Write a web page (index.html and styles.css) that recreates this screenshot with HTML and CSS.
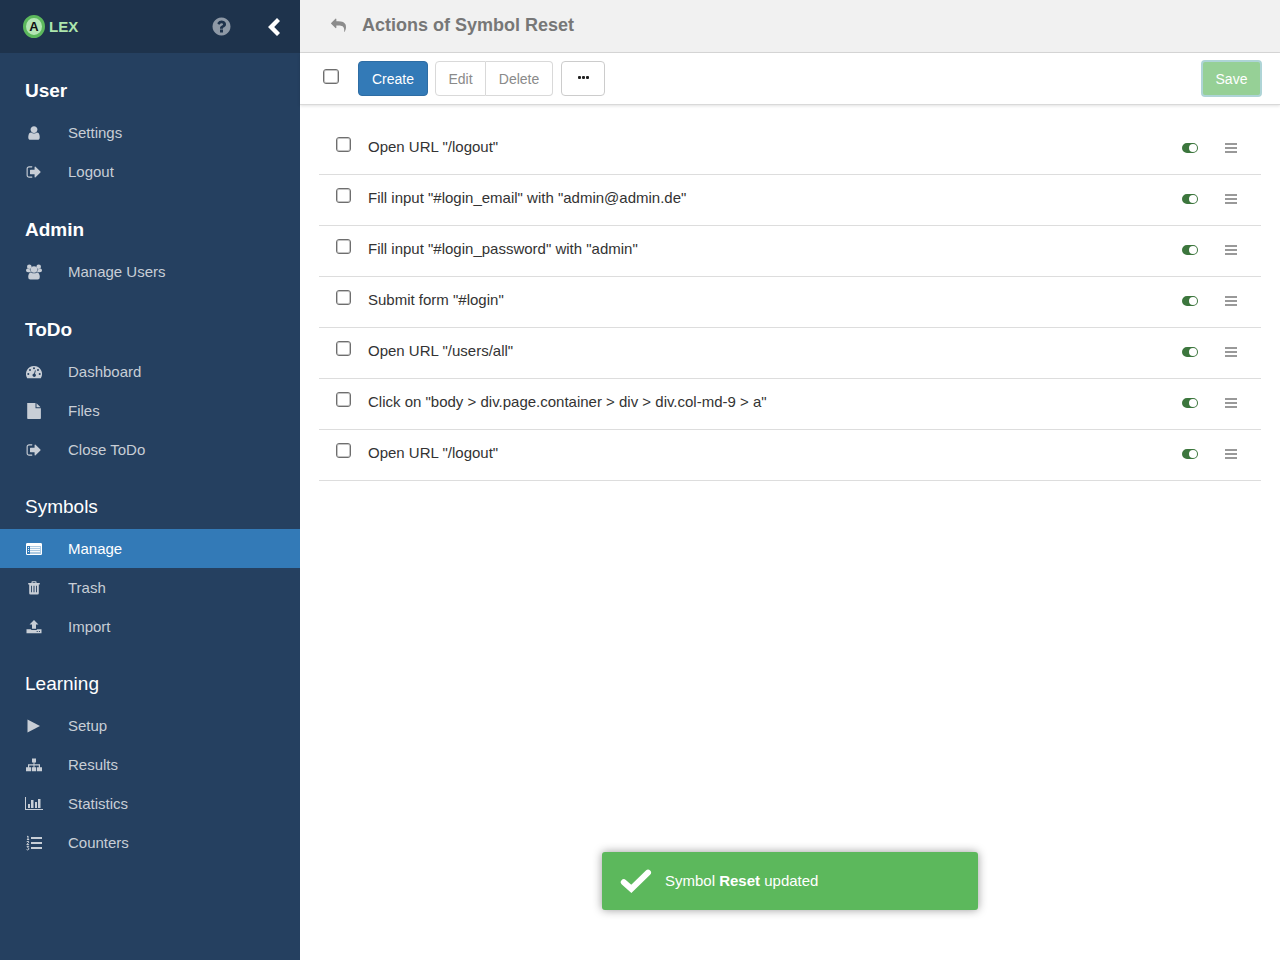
FILE: index.html
```html
<!DOCTYPE html>
<html lang="en">
<head>
<meta charset="utf-8">
<meta name="viewport" content="width=device-width, initial-scale=1">
<title>ALEX - Actions of Symbol Reset</title>
<link rel="stylesheet" href="styles.css">
</head>
<body>
<svg class="sprite" aria-hidden="true">
  <symbol id="i-user" viewBox="0 0 1792 1792"><path d="M1536 1399q0 109-62.5 187t-150.5 78h-854q-88 0-150.5-78t-62.5-187q0-85 8.5-160.5t31.5-152 58.5-131 94-89 134.5-34.5q131 128 313 128t313-128q76 0 134.5 34.5t94 89 58.5 131 31.5 152 8.5 160.5zm-256-887q0 159-112.5 271.5t-271.5 112.5-271.5-112.5-112.5-271.5 112.5-271.5 271.5-112.5 271.5 112.5 112.5 271.5z"/></symbol>
  <symbol id="i-out" viewBox="0 0 1792 1792"><path d="M704 1440q0 4 1 20t.5 26.500-3 23.500-10 19.500-20.500 6.500h-320q-119 0-203.500-84.500t-84.500-203.500v-704q0-119 84.500-203.500t203.500-84.500h320q13 0 22.500 9.500t9.500 22.500q0 4 1 20t.5 26.500-3 23.500-10 19.500-20.500 6.500h-320q-66 0-113 47t-47 113v704q0 66 47 113t113 47h312l11.500 1 11.500 3 8 5.500 7 9 2 13.500zm928-544q0 26-19 45l-544 544q-19 19-45 19t-45-19-19-45v-288h-448q-26 0-45-19t-19-45v-384q0-26 19-45t45-19h448v-288q0-26 19-45t45-19 45 19l544 544q19 19 19 45z"/></symbol>
  <symbol id="i-help" viewBox="0 0 1792 1792"><path d="M1024 1376v-192q0-14-9-23t-23-9h-192q-14 0-23 9t-9 23v192q0 14 9 23t23 9h192q14 0 23-9t9-23zm256-672q0-88-55.500-163t-138.500-116-170-41q-243 0-371 213-15 24 8 42l132 100q7 6 19 6 16 0 25-12 53-68 86-92 34-24 86-24 48 0 85.500 26t37.500 59q0 38-20 61t-68 45q-63 28-115.500 86.500t-52.500 125.500v36q0 14 9 23t23 9h192q14 0 23-9t9-23q0-19 21.500-49.500t54.500-49.500q32-18 49-28.500t46-35 44.500-48 28-60.500 12.500-81zm384 192q0 209-103 385.500t-279.500 279.500-385.500 103-385.500-103-279.500-279.500-103-385.500 103-385.500 279.500-279.500 385.500-103 385.500 103 279.500 279.500 103 385.500z"/></symbol>
  <symbol id="i-reply" viewBox="0 0 1792 1792"><path d="M1792 1120q0 166-127 451-3 7-10.500 24t-13.500 30-13 22q-12 17-28 17-15 0-23.500-10t-8.500-25q0-9 2.500-26.500t2.500-23.500q5-68 5-123 0-101-17.500-181t-48.500-138.500-80-101-105.500-69.500-133-42.500-154-21.500-175.500-6h-224v256q0 26-19 45t-45 19-45-19l-512-512q-19-19-19-45t19-45l512-512q19-19 45-19t45 19 19 45v256h224q713 0 875 403 53 134 53 333z"/></symbol>
  <symbol id="i-users" viewBox="0 0 16 16"><circle cx="3.300" cy="2.700" r="2.300"/><circle cx="12.700" cy="2.700" r="2.300"/><path d="M1.200 4.500Q2.300 5.400 4.400 5.300 4.300 7 5 8.200H2Q0 8.200 0 6.500 0 5 1.200 4.500zM14.800 4.500Q13.700 5.400 11.600 5.300 11.700 7 11 8.200H14Q16 8.200 16 6.500 16 5 14.800 4.500z"/><circle cx="8" cy="5.500" r="3.300"/><path d="M5.200 8.400Q6.400 9.300 8 9.300T10.800 8.400Q13.800 8.500 13.800 13 13.800 15.500 11.700 15.500H4.300Q2.200 15.500 2.200 13 2.200 8.500 5.200 8.400z"/></symbol>
  <symbol id="i-dash" viewBox="0 0 16 16"><path fill-rule="evenodd" d="M8 2A8 8 0 0 0 1.200 14.200Q1.400 14.300 1.600 14.300H14.400Q14.600 14.300 14.800 14.200A8 8 0 0 0 8 2zM2.300 9A1 1 0 1 1 2.300 11 1 1 0 1 1 2.300 9zM4 5A1 1 0 1 1 4 7 1 1 0 1 1 4 5zM8 3.200A1 1 0 1 1 8 5.200 1 1 0 1 1 8 3.200zM12 5A1 1 0 1 1 12 7 1 1 0 1 1 12 5zM13.700 9A1 1 0 1 1 13.700 11 1 1 0 1 1 13.700 9zM9 6.300 9.800 6.600 9 9.700A1.700 1.700 0 1 1 8.100 9.500z"/></symbol>
  <symbol id="i-file" viewBox="0 0 16 16"><path d="M1.200 0H9.500V5.200H14.900V15.200Q14.900 16 14.100 16H2Q1.200 16 1.200 15.200zM10.500.2 14.600 4.200H10.500z"/></symbol>
  <symbol id="i-list" viewBox="0 0 16 16"><path fill-rule="evenodd" d="M1.300 2H14.700Q16 2 16 3.300V12.700Q16 14 14.700 14H1.300Q0 14 0 12.700V3.300Q0 2 1.300 2zM1 5V13H15V5z"/><path opacity=".9" d="M2 6H3V7H2zM4 6H14V7H4zM2 8H3V9H2zM4 8H14V9H4zM2 10H3V11H2zM4 10H14V11H4z"/><path opacity=".6" d="M4 5H15V13H4z"/></symbol>
  <symbol id="i-trash" viewBox="0 0 16 16"><path fill-rule="evenodd" d="M5.500 3V2Q5.500 1.200 6.300 1.200H9.700Q10.500 1.200 10.500 2V3H13.800V4.400H12.800V13.300Q12.800 14.600 11.500 14.600H4.500Q3.200 14.600 3.200 13.300V4.400H2.200V3zM6.600 3H9.400V2.300H6.600zM5.100 5.800V12.200H6V5.800zM7.500 5.800V12.200H8.500V5.800zM10 5.800V12.200H10.900V5.800z"/></symbol>
  <symbol id="i-upload" viewBox="0 0 16 16"><path fill-rule="evenodd" d="M8 1 12.500 5.600H10V9.700H6V5.600H3.500zM.5 10.200H5.200V10.900H10.800V10.200H15.500V14.300H.5zM10.700 12.100V13.100H11.700V12.100zM12.900 12.100V13.100H13.900V12.100z"/></symbol>
  <symbol id="i-play" viewBox="0 0 16 16"><path d="M1.500 1.500 14 8 1.500 14.500z"/></symbol>
  <symbol id="i-sitemap" viewBox="0 0 16 16"><path d="M6 1.500H10V5.500H8.500V7.300H14V10.300H16V14.300H11V10.300H12.800V8.400H8.500V10.300H10.200V14.300H5.800V10.300H7.500V8.400H3.200V10.300H5V14.300H0V10.300H2V7.300H7.500V5.500H6z"/></symbol>
  <symbol id="i-chart" viewBox="0 0 18 16"><path d="M0 1H1V13H18V14H0zM3 8H5V12H3zM6 4H8.500V12H6zM10 6H12V12H10zM13 3H15.500V12H13z"/></symbol>
  <symbol id="i-ol" viewBox="0 0 16 16"><path d="M5 2H16V4H5zM5 7H16V9H5zM5 12H16V14H5z"/><path class="line" d="M1 1.700 2 1V4.400M.9 4.500H3.200M.7 6.700Q3 5.500 2.800 7.200L.8 9.600H3.100M.7 11.400H2.800L1.700 12.700Q3.500 13.200 2.600 14.500 1.700 15.400.6 14.500"/></symbol>
  <symbol id="i-toggle" viewBox="0 0 16 10"><path fill-rule="evenodd" d="M5 0H11A5 5 0 0 1 11 10H5A5 5 0 0 1 5 0zM11 1A4 4 0 0 0 11 9 4 4 0 0 0 11 1z"/></symbol>
  <symbol id="i-bars" viewBox="0 0 12 10"><path d="M0 0H12V2H0zM0 4H12V6H0zM0 8H12V10H0z"/></symbol>
  <symbol id="i-left" viewBox="0 0 12 18"><path d="M9 0 12 3 6.200 9 12 15 9 18 0 9z"/></symbol>
  <symbol id="i-check" viewBox="0 0 32 24"><path d="M3.800 13.200 11.300 19.800 28 3.700"/></symbol>
</svg>
<div class="app">
  <aside class="sidebar">
    <header class="brand">
      <a class="brand-link" href="#"><span class="brand-mark">A</span>LEX</a>
      <button class="help" type="button" aria-label="Help"><svg><use href="#i-help"/></svg></button>
      <button class="collapse" type="button" aria-label="Collapse menu"><svg><use href="#i-left"/></svg></button>
    </header>
    <nav class="nav">
      <section class="group account">
        <h2>User</h2>
        <a href="#"><svg><use href="#i-user"/></svg>Settings</a>
        <a href="#"><svg><use href="#i-out"/></svg>Logout</a>
      </section>
      <section class="group account">
        <h2>Admin</h2>
        <a href="#"><svg><use href="#i-users"/></svg>Manage Users</a>
      </section>
      <section class="group">
        <h2>ToDo</h2>
        <a href="#"><svg><use href="#i-dash"/></svg>Dashboard</a>
        <a href="#"><svg><use href="#i-file"/></svg>Files</a>
        <a href="#"><svg><use href="#i-out"/></svg>Close ToDo</a>
      </section>
      <section class="group">
        <h3>Symbols</h3>
        <a class="active" href="#"><svg><use href="#i-list"/></svg>Manage</a>
        <a href="#"><svg><use href="#i-trash"/></svg>Trash</a>
        <a href="#"><svg><use href="#i-upload"/></svg>Import</a>
      </section>
      <section class="group">
        <h3>Learning</h3>
        <a href="#"><svg><use href="#i-play"/></svg>Setup</a>
        <a href="#"><svg><use href="#i-sitemap"/></svg>Results</a>
        <a href="#"><svg class="wide"><use href="#i-chart"/></svg>Statistics</a>
        <a href="#"><svg><use href="#i-ol"/></svg>Counters</a>
      </section>
    </nav>
  </aside>
  <main class="main">
    <header class="title-bar">
      <a class="back" href="#" aria-label="Back"><svg><use href="#i-reply"/></svg></a>
      <h1>Actions of Symbol Reset</h1>
    </header>
    <div class="toolbar">
      <input class="check" type="checkbox" aria-label="Select all actions">
      <button class="btn primary" type="button">Create</button>
      <div class="btn-group">
        <button class="btn" type="button" disabled>Edit</button>
        <button class="btn" type="button" disabled>Delete</button>
      </div>
      <button class="btn more" type="button" aria-label="More"><i></i><i></i><i></i></button>
      <button class="btn save" type="button">Save</button>
    </div>
    <ul class="actions">
      <li><input class="check" type="checkbox" id="a1"><label for="a1">Open URL "/logout"</label><button class="toggle" type="button" aria-label="Toggle action"><svg><use href="#i-toggle"/></svg></button><button class="drag" type="button" aria-label="Reorder action"><svg><use href="#i-bars"/></svg></button></li>
      <li><input class="check" type="checkbox" id="a2"><label for="a2">Fill input "#login_email" with "admin@admin.de"</label><button class="toggle" type="button" aria-label="Toggle action"><svg><use href="#i-toggle"/></svg></button><button class="drag" type="button" aria-label="Reorder action"><svg><use href="#i-bars"/></svg></button></li>
      <li><input class="check" type="checkbox" id="a3"><label for="a3">Fill input "#login_password" with "admin"</label><button class="toggle" type="button" aria-label="Toggle action"><svg><use href="#i-toggle"/></svg></button><button class="drag" type="button" aria-label="Reorder action"><svg><use href="#i-bars"/></svg></button></li>
      <li><input class="check" type="checkbox" id="a4"><label for="a4">Submit form "#login"</label><button class="toggle" type="button" aria-label="Toggle action"><svg><use href="#i-toggle"/></svg></button><button class="drag" type="button" aria-label="Reorder action"><svg><use href="#i-bars"/></svg></button></li>
      <li><input class="check" type="checkbox" id="a5"><label for="a5">Open URL "/users/all"</label><button class="toggle" type="button" aria-label="Toggle action"><svg><use href="#i-toggle"/></svg></button><button class="drag" type="button" aria-label="Reorder action"><svg><use href="#i-bars"/></svg></button></li>
      <li><input class="check" type="checkbox" id="a6"><label for="a6">Click on "body &gt; div.page.container &gt; div &gt; div.col-md-9 &gt; a"</label><button class="toggle" type="button" aria-label="Toggle action"><svg><use href="#i-toggle"/></svg></button><button class="drag" type="button" aria-label="Reorder action"><svg><use href="#i-bars"/></svg></button></li>
      <li><input class="check" type="checkbox" id="a7"><label for="a7">Open URL "/logout"</label><button class="toggle" type="button" aria-label="Toggle action"><svg><use href="#i-toggle"/></svg></button><button class="drag" type="button" aria-label="Reorder action"><svg><use href="#i-bars"/></svg></button></li>
    </ul>
    <div class="toast" role="status">
      <svg><use href="#i-check"/></svg>
      <p>Symbol <strong>Reset</strong> updated</p>
    </div>
  </main>
</div>
</body>
</html>
```
FILE: styles.css
```css
* { box-sizing: border-box; }
body {
  margin: 0;
  font: 15px/20px "Liberation Sans", Arial, sans-serif;
  color: #333;
  background: #fff;
}
h1, h2, h3, p, ul { margin: 0; padding: 0; }
a { color: inherit; text-decoration: none; }
button { font: inherit; color: inherit; background: none; border: 0; padding: 0; cursor: pointer; }
svg { display: block; fill: currentColor; }
.sprite { position: absolute; width: 0; height: 0; }
.line { fill: none; stroke: currentColor; stroke-width: 1; }

.app { display: flex; min-height: 100vh; }

.sidebar { flex: 0 0 300px; background: #254060; color: #c8ced6; }
.brand {
  display: flex;
  align-items: center;
  height: 53px;
  padding: 0 20px 0 23px;
  background: #1e334c;
}
.brand-link {
  display: flex;
  align-items: center;
  gap: 4px;
  margin-right: auto;
  font-weight: bold;
  color: #ade6ad;
}
.brand-mark {
  display: flex;
  align-items: center;
  justify-content: center;
  width: 22px;
  height: 23px;
  border: 3px solid #5cb85c;
  border-radius: 50%;
  background: #b4e6b4;
  color: #111;
  font-size: 13px;
  line-height: 16px;
}
.help { margin-right: 36px; color: #8e99a6; }
.help svg { width: 21px; height: 21px; }
.collapse { color: #fff; }
.collapse svg { width: 12px; height: 18px; }

.nav { padding-top: 24px; }
.group { margin-bottom: 24px; }
.account { margin-bottom: 25px; }
.group h2, .group h3 {
  margin-bottom: 9px;
  padding-left: 25px;
  font-size: 19px;
  line-height: 27px;
  color: #fff;
}
.group h3 { font-weight: normal; }
.group a {
  display: grid;
  grid-template-columns: 18px 1fr;
  gap: 25px;
  align-items: center;
  height: 39px;
  padding-left: 25px;
}
.group svg { justify-self: center; width: 16px; height: 16px; }
.group .wide { width: 18px; }
.group .active { background: #337ab7; color: #fff; }

.main { position: relative; flex: 1; min-width: 0; }
.title-bar {
  display: flex;
  align-items: center;
  gap: 16px;
  height: 53px;
  padding: 0 31px 2px;
  background: #f1f1f1;
  border-bottom: 1px solid #d9d9d9;
  color: #777;
}
.title-bar h1 { font-size: 18px; line-height: 24px; }
.back svg { width: 15px; height: 15px; color: #8c8c8c; }
.toolbar {
  display: flex;
  align-items: center;
  height: 52px;
  padding: 0 18px 0 23px;
  border-bottom: 1px solid #d9d9d9;
  box-shadow: 0 1px 3px rgba(0, 0, 0, .12);
}
.check {
  appearance: none;
  flex: none;
  width: 15px;
  height: 15px;
  margin: 0;
  border: 1px solid #6e6e6e;
  border-radius: 3px;
  background: #fff;
  box-shadow: inset 0 0 0 1px #c4c4c4;
}
.toolbar .check { width: 16px; margin: 0 19px 4px 0; }
.btn {
  height: 35px;
  padding: 0 13px;
  border: 1px solid #ccc;
  border-radius: 4px;
  background: #fff;
  font-size: 14px;
  line-height: 20px;
}
.btn:disabled { color: #8a8a8a; border-color: #d9d9d9; }
.primary { width: 70px; padding: 0; background: #337ab7; border-color: #2e6da4; color: #fff; }
.btn-group { display: flex; margin: 0 8px 0 7px; }
.btn-group .btn { padding: 0 12px; }
.btn-group .btn:first-child { width: 51px; border-radius: 4px 0 0 4px; }
.btn-group .btn:last-child { width: 67px; border-radius: 0 4px 4px 0; border-left: 0; }
.more { display: flex; align-items: center; justify-content: center; gap: 1px; width: 44px; padding-bottom: 2px; }
.more i { width: 3px; height: 3px; border-radius: 1px; background: #222; }
.save {
  height: 37px;
  width: 61px;
  padding: 0;
  margin-left: auto;
  background: #96d096;
  border: 2px solid #aed4d6;
  color: #fff;
}

.actions { padding: 19px; list-style: none; }
.actions li {
  display: flex;
  align-items: flex-start;
  height: 51px;
  padding: 13px 24px 0 17px;
  border-bottom: 1px solid #ddd;
}
.actions label { flex: 1; padding-left: 17px; }
.toggle, .drag { padding-top: 6px; }
.toggle { margin-right: 27px; color: #3c763d; }
.toggle svg { width: 16px; height: 10px; }
.drag { color: #999; }
.drag svg { width: 12px; height: 10px; }

.toast {
  position: absolute;
  left: 50%;
  bottom: 50px;
  display: flex;
  align-items: center;
  gap: 13px;
  width: 376px;
  height: 58px;
  padding: 0 18px;
  transform: translateX(-50%);
  border-radius: 3px;
  background: #5cb85c;
  box-shadow: 0 0 10px rgba(0, 0, 0, .4);
  color: #fff;
}
.toast svg { width: 32px; height: 24px; fill: none; stroke: #fff; stroke-width: 6px; stroke-linecap: round; }
```
